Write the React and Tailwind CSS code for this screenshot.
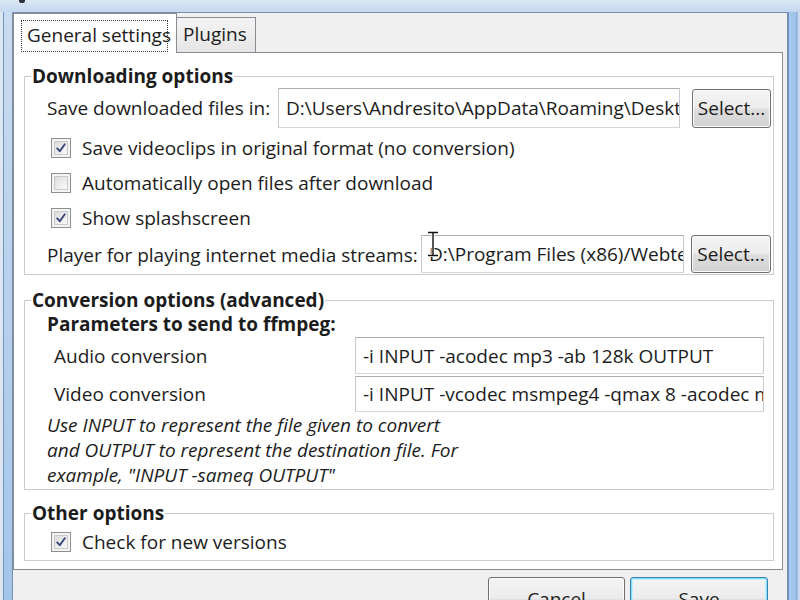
import React from "react";

function CheckBox({ checked }) {
  return (
    <span className="flex h-[20px] w-[20px] shrink-0 items-center justify-center border border-[#8e8f8f] bg-[#f4f4f4] p-[2px]">
      <span className="flex h-full w-full items-center justify-center border border-[#c9c9c9] bg-[linear-gradient(135deg,#dcdcdc,#f9f9f9)]">
        {checked && (
          <svg width="12" height="12" viewBox="0 0 12 12">
            <path d="M2.2 6.4 L4.8 9.2 L9.8 2.2" fill="none" stroke="#36457a" strokeWidth="1.9" strokeLinecap="round" strokeLinejoin="round" />
          </svg>
        )}
      </span>
    </span>
  );
}

function TextBox({ value, className = "" }) {
  return (
    <div className={`flex items-center overflow-hidden whitespace-nowrap border border-[#abadb3] border-l-[#c9cbd0] border-r-[#c9cbd0] border-b-[#d4d6da] bg-white pl-[7px] ${className}`}>
      {value}
    </div>
  );
}

function WinButton({ children, isDefault, className = "" }) {
  const look = isDefault
    ? "border-[#3c7fb1] shadow-[inset_0_0_0_1px_#7fe2fa,inset_0_0_0_2px_#c8f0fb]"
    : "border-[#707070] shadow-[inset_0_0_0_1px_#fbfbfb]";
  return (
    <button className={`flex shrink-0 items-center justify-center rounded-[3px] border bg-[linear-gradient(180deg,#f4f4f4,#ececec_48%,#dedede_52%,#d2d2d2)] ${look} ${className}`}>
      {children}
    </button>
  );
}

function Group({ title, className = "", children }) {
  return (
    <fieldset className={`border border-[#c9cdd2] ${className}`}>
      <legend className="ml-[6px] px-[1px] font-bold leading-[24px]">{title}</legend>
      <div className="pb-[1px] pl-[22px]">{children}</div>
    </fieldset>
  );
}

export default function App() {
  return (
    <div className="relative h-[600px] w-[800px] overflow-hidden bg-[linear-gradient(180deg,#cbdcef,#a4c5ea)] font-['Open_Sans',sans-serif] text-[19px] leading-[24px] text-[#1c1c1c]">
      {/* title bar fragment */}
      <div className="flex h-[12px] bg-[linear-gradient(180deg,#dbe7f5,#c4d8ef)]">
        <div className="ml-[19px] h-[3px] w-[6px] rounded-b-[2px] bg-[#2a2f3a]" />
      </div>

      <div className="flex h-[588px]">
        {/* left frame */}
        <div className="w-[12px] shrink-0 bg-[linear-gradient(90deg,#dde6f1_0,#dde6f1_3px,#7193be_3px,#7193be_4px,transparent_4px)]" />

        {/* dialog body */}
        <div className="flex w-[776px] shrink-0 flex-col overflow-hidden border-l border-r border-t border-[#7990ad] bg-[#f0f0f0]">
          {/* tabs */}
          <div className="flex h-[39px] shrink-0 items-end whitespace-nowrap">
            <div className="relative z-10 -mb-[1px] h-[40px] w-[164px] border border-b-0 border-[#898c95] bg-white">
              <div className="ml-[7px] mt-[6px] h-[32px] w-[147px] border border-dotted border-[#3a3a3a] pl-[5px] pt-[2px]">
                General settings
              </div>
            </div>
            <div className="-ml-[1px] h-[35px] w-[80px] border border-b-0 border-[#898c95] bg-[linear-gradient(180deg,#f3f3f3,#e6e6e6)] pl-[6px] pt-[4px]">
              Plugins
            </div>
          </div>

          {/* tab panel */}
          <div className="h-[518px] w-[770px] shrink-0 border border-[#898c95] bg-white pl-[10px] pr-[8px]">
            <Group title="Downloading options" className="mt-[11px]">
              <div className="flex h-[40px] items-center">
                <span className="w-[231px] shrink-0">Save downloaded files in:</span>
                <TextBox className="h-[40px] w-[402px] shrink-0" value="D:\Users\Andresito\AppData\Roaming\Deskt" />
                <WinButton className="ml-[12px] h-[39px] w-[79px]">Select...</WinButton>
              </div>
              <div className="mt-[2px]">
                <div className="flex h-[35px] items-center">
                  <span className="ml-[4px]"><CheckBox checked /></span>
                  <span className="ml-[11px]">Save videoclips in original format (no conversion)</span>
                </div>
                <div className="flex h-[35px] items-center">
                  <span className="ml-[4px]"><CheckBox /></span>
                  <span className="ml-[11px]">Automatically open files after download</span>
                </div>
                <div className="flex h-[35px] items-center">
                  <span className="ml-[4px]"><CheckBox checked /></span>
                  <span className="ml-[11px]">Show splashscreen</span>
                </div>
              </div>
              <div className="flex h-[38px] items-center">
                <span className="w-[374px] shrink-0 pt-[2px]">Player for playing internet media streams:</span>
                <TextBox className="h-[38px] w-[263px] shrink-0" value="D:\Program Files (x86)/Webteh" />
                <WinButton className="ml-[7px] h-[38px] w-[80px]">Select...</WinButton>
              </div>
            </Group>

            <Group title="Conversion options (advanced)" className="mt-[13px]">
              <div className="h-[25px] font-bold leading-[25px]">Parameters to send to ffmpeg:</div>
              <div className="flex h-[37px] items-center">
                <span className="w-[308px] shrink-0 pl-[7px]">Audio conversion</span>
                <TextBox className="h-[37px] w-[409px] shrink-0" value="-i INPUT -acodec mp3 -ab 128k OUTPUT" />
              </div>
              <div className="mt-[2px] flex h-[36px] items-center">
                <span className="w-[308px] shrink-0 pl-[7px]">Video conversion</span>
                <TextBox className="h-[36px] w-[409px] shrink-0" value="-i INPUT -vcodec msmpeg4 -qmax 8 -acodec mp3" />
              </div>
              <p className="mt-[1px] italic leading-[25px]">
                Use INPUT to represent the file given to convert
                <br />
                and OUTPUT to represent the destination file. For
                <br />
                example, "INPUT -sameq OUTPUT"
              </p>
            </Group>

            <Group title="Other options" className="mt-[11px]">
              <div className="flex h-[34px] items-center">
                <span className="ml-[4px]"><CheckBox checked /></span>
                <span className="ml-[11px]">Check for new versions</span>
              </div>
            </Group>
          </div>

          {/* dialog buttons */}
          <div className="mt-[7px] flex shrink-0 justify-end gap-[5px] pr-[19px]">
            <WinButton className="h-[44px] w-[137px]">Cancel</WinButton>
            <WinButton isDefault className="h-[44px] w-[138px]">Save</WinButton>
          </div>
        </div>

        {/* right frame */}
        <div className="w-[12px] shrink-0 bg-[linear-gradient(90deg,#6f93c0_0,#6f93c0_1px,#a9c9ee_1px,#9dc0ea_8px,#7aa0cf_9px,#c7dbf1_10px)]" />
      </div>

      {/* text cursor over the player path */}
      <svg className="absolute left-[425px] top-[231px]" width="16" height="26" viewBox="0 0 16 26">
        <path d="M3 1.5 H13 M8 1.5 V24.5 M3 24.5 H13" fill="none" stroke="#ffffff" strokeWidth="3" />
        <path d="M3 1.5 H13 M8 1.5 V24.5 M3 24.5 H13" fill="none" stroke="#111111" strokeWidth="1.4" />
      </svg>
    </div>
  );
}
